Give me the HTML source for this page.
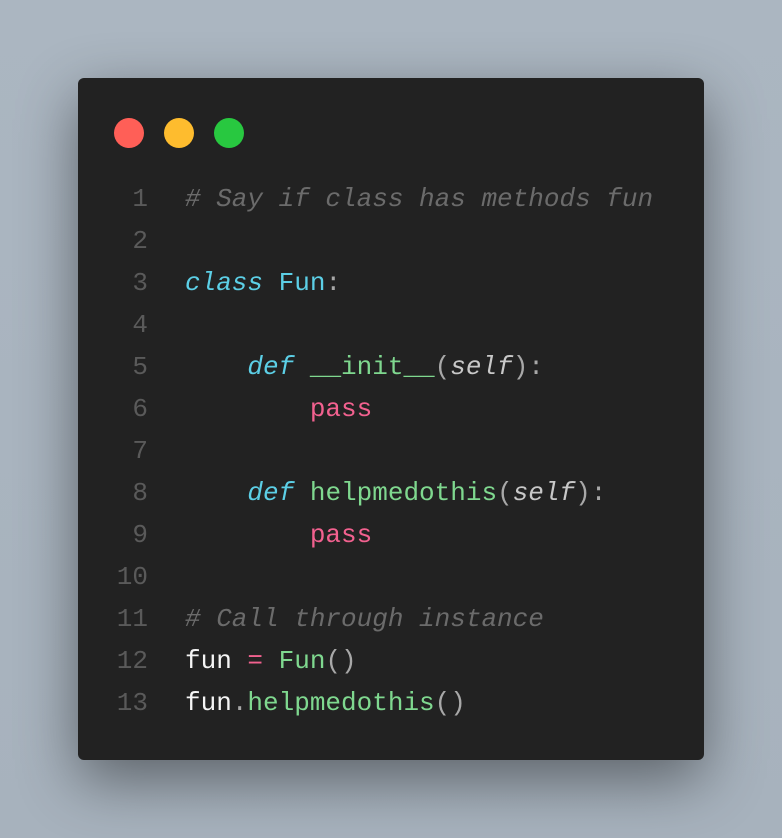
<!DOCTYPE html>
<html><head><meta charset="utf-8"><style>
html,body{margin:0;padding:0;}
body{width:782px;height:838px;background:linear-gradient(180deg,#abb6c1,#a7b2bd);position:relative;overflow:hidden;font-family:"Liberation Mono",monospace;}
.win{position:absolute;left:78px;top:78px;width:626px;height:682px;background:#222222;border-radius:6px;box-shadow:0 20px 60px rgba(0,0,0,0.45);}
.dot{position:absolute;top:40px;width:30px;height:30px;border-radius:50%;}
.code{position:absolute;left:0;top:100px;font-size:26px;line-height:42px;white-space:pre;}
.ln{position:absolute;left:0;top:0;width:70px;text-align:right;color:#5a5a5a;}
.tx{position:absolute;left:107px;top:0;color:#f5f5f5;}
.c{color:#6b6b6b;font-style:italic}
.k{color:#5ccfe6;font-style:italic}
.t{color:#5ccfe6}
.f{color:#7fd88f}
.p{color:#f2618f}
.s{color:#c8c8c8;font-style:italic}
.u{color:#a8a8a8}
</style></head><body>
<div class="win">
<div class="dot" style="left:36px;background:#ff5f57"></div>
<div class="dot" style="left:86px;background:#febc2e"></div>
<div class="dot" style="left:136px;background:#28c840"></div>
<div class="code"><div class="ln">1
2
3
4
5
6
7
8
9
10
11
12
13</div><div class="tx"><span class="c"># Say if class has methods fun</span>

<span class="k">class</span> <span class="t">Fun</span><span class="u">:</span>

    <span class="k">def</span> <span class="f">__init__</span><span class="u">(</span><span class="s">self</span><span class="u">):</span>
        <span class="p">pass</span>

    <span class="k">def</span> <span class="f">helpmedothis</span><span class="u">(</span><span class="s">self</span><span class="u">):</span>
        <span class="p">pass</span>

<span class="c"># Call through instance</span>
fun <span class="p">=</span> <span class="f">Fun</span><span class="u">()</span>
fun<span class="u">.</span><span class="f">helpmedothis</span><span class="u">()</span></div></div>
</div>
</body></html>
